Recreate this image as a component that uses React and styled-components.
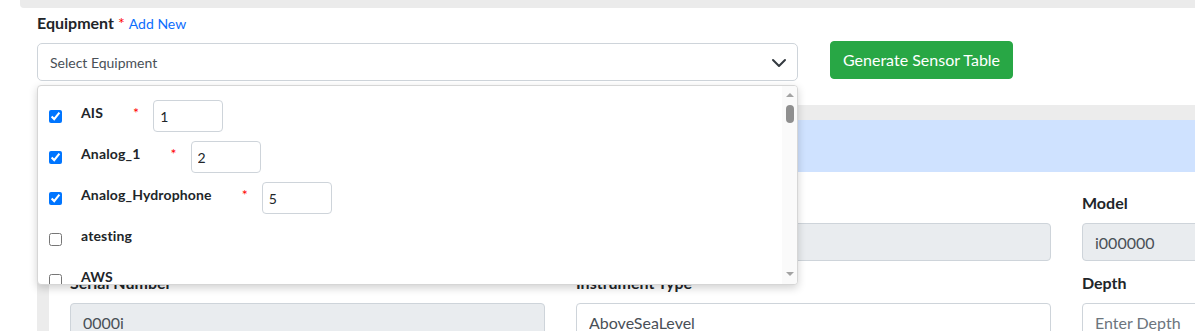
import React from "react";
import styled, { createGlobalStyle } from "styled-components";

const Global = createGlobalStyle`
  html, body { margin: 0; padding: 0; background: #fff; }
  body { font-family: Lato, "Noto Sans", sans-serif; color: #212529; }
  * { box-sizing: border-box; }
`;

const Page = styled.div`
  width: 1195px;
  height: 331px;
  overflow: hidden;
  background: #fff;
`;

const TopStrip = styled.div`
  margin-left: 20px;
  height: 8px;
  background: #ebebeb;
  border-bottom-left-radius: 4px;
`;

const Toolbar = styled.div`
  display: flex;
  align-items: flex-end;
  padding: 3px 0 0 37px;
`;

const FieldColumn = styled.div`
  width: 761px;
  display: flex;
  flex-direction: column;
`;

const TopLabel = styled.div`
  font-size: 16px;
  font-weight: 700;
  line-height: 24px;
  margin-bottom: 7px;
`;

const Required = styled.span`
  color: red;
  margin-left: ${(p) => p.$gap || 4}px;
  font-weight: 400;
`;

const AddLink = styled.a`
  color: #0d6efd;
  font-size: 14px;
  font-weight: 400;
  margin-left: 4px;
  text-decoration: none;
`;

const SelectWrap = styled.div`
  position: relative;
`;

const SelectBox = styled.div`
  height: 38px;
  border: 1px solid #ced4da;
  border-radius: 5px;
  display: flex;
  align-items: center;
  justify-content: space-between;
  padding: 0 10px 0 12px;
  font-size: 14px;
  color: #495057;
  background: #fff;
`;

const GreenButton = styled.button`
  margin: 0 0 2px 32px;
  height: 38px;
  padding: 0 12px;
  border: 1px solid #28a745;
  border-radius: 4px;
  background: #28a745;
  color: #fff;
  font-family: inherit;
  font-size: 16px;
  line-height: 24px;
`;

const Dropdown = styled.div`
  position: absolute;
  top: calc(100% + 4px);
  left: 0;
  width: 100%;
  height: 200px;
  background: #fff;
  border: 1px solid #d6d6d6;
  border-radius: 4px;
  box-shadow: 0 3px 8px rgba(0, 0, 0, 0.18);
  display: flex;
  overflow: hidden;
  z-index: 10;
`;

const OptionList = styled.div`
  flex: 1;
  padding: 14px 0 0 11px;
  display: flex;
  flex-direction: column;
  gap: 9px;
`;

const OptionRow = styled.div`
  display: flex;
  align-items: center;
  min-height: 32px;
  flex-shrink: 0;
`;

const Check = styled.input.attrs({ type: "checkbox" })`
  width: 13px;
  height: 13px;
  margin: 0 19px 0 0;
  flex-shrink: 0;
`;

const OptionLabel = styled.span`
  font-size: 14px;
  font-weight: 700;
  line-height: 20px;
  letter-spacing: 0.15px;
  margin-bottom: 6px;
  white-space: nowrap;
`;

const QtyInput = styled.input`
  width: 70px;
  height: 32px;
  margin-left: 14px;
  border: 1px solid #ced4da;
  border-radius: 4px;
  padding: 0 6px;
  font-family: inherit;
  font-size: 14px;
  color: #212529;
  background: #fff;
`;

const ScrollTrack = styled.div`
  width: 15px;
  background: #fafafa;
  display: flex;
  flex-direction: column;
  align-items: center;
  padding: 7px 0 8px;
`;

const Arrow = styled.div`
  width: 0;
  height: 0;
  border-left: 4px solid transparent;
  border-right: 4px solid transparent;
  ${(p) =>
    p.$down
      ? "border-top: 4px solid #a3a3a3;"
      : "border-bottom: 4px solid #a3a3a3;"}
`;

const Thumb = styled.div`
  margin-top: 8px;
  width: 8px;
  height: 18px;
  border-radius: 4px;
  background: #8f8f8f;
`;

const Spacer = styled.div`
  flex: 1;
`;

const GrayPanel = styled.div`
  margin: 24px 0 0 37px;
  padding: 15px 0 0 12px;
  background: #ececec;
  height: 240px;
`;

const Card = styled.div`
  background: #fff;
  height: 100%;
`;

const CardHeader = styled.div`
  height: 52px;
  background: #cfe2ff;
`;

const CardBody = styled.div`
  padding: 19px 0 0 21px;
  display: grid;
  grid-template-columns: repeat(3, 475px);
  column-gap: 31px;
  row-gap: 10px;
`;

const Field = styled.div`
  display: flex;
  flex-direction: column;
`;

const FieldLabel = styled.label`
  font-size: 16px;
  font-weight: 700;
  line-height: 24px;
  margin-bottom: 8px;
`;

const TextInput = styled.input`
  height: 38px;
  border: 1px solid #ced4da;
  border-radius: 4px;
  padding: 0 12px;
  font-family: inherit;
  font-size: 16px;
  color: #495057;
  background: ${(p) => (p.readOnly ? "#e9ecef" : "#fff")};
  &::placeholder { color: #6c757d; }
`;

const Chevron = () => (
  <svg width="16" height="12" viewBox="0 0 16 12" fill="none">
    <path d="m2 4 6 6 6-6" stroke="#343a40" strokeWidth="2" strokeLinecap="round" strokeLinejoin="round" />
  </svg>
);

const options = [
  { name: "AIS", checked: true, qty: "1" },
  { name: "Analog_1", checked: true, qty: "2" },
  { name: "Analog_Hydrophone", checked: true, qty: "5" },
  { name: "atesting", checked: false },
  { name: "AWS", checked: false },
  { name: "Barometer", checked: false },
];

const fields = [
  { label: "Equipment Name", value: "AIS", readOnly: true },
  { label: "Manufacturer", value: "AIS", readOnly: true },
  { label: "Model", value: "i000000", readOnly: true },
  { label: "Serial Number", value: "0000i", readOnly: true },
  { label: "Instrument Type", value: "AboveSeaLevel", readOnly: false },
  { label: "Depth", placeholder: "Enter Depth", readOnly: false },
];

export default function App() {
  return (
    <Page>
      <Global />
      <TopStrip />
      <Toolbar>
        <FieldColumn>
          <TopLabel>
            Equipment<Required>*</Required>
            <AddLink href="#">Add New</AddLink>
          </TopLabel>
          <SelectWrap>
            <SelectBox>
              <span>Select Equipment</span>
              <Chevron />
            </SelectBox>
            <Dropdown>
              <OptionList>
                {options.map((o) => (
                  <OptionRow key={o.name}>
                    <Check defaultChecked={o.checked} />
                    <OptionLabel>
                      {o.name}
                      {o.checked && <Required $gap={30}>*</Required>}
                    </OptionLabel>
                    {o.checked && <QtyInput defaultValue={o.qty} />}
                  </OptionRow>
                ))}
              </OptionList>
              <ScrollTrack>
                <Arrow />
                <Thumb />
                <Spacer />
                <Arrow $down />
              </ScrollTrack>
            </Dropdown>
          </SelectWrap>
        </FieldColumn>
        <GreenButton>Generate Sensor Table</GreenButton>
      </Toolbar>
      <GrayPanel>
        <Card>
          <CardHeader />
          <CardBody>
            {fields.map((f) => (
              <Field key={f.label}>
                <FieldLabel>{f.label}</FieldLabel>
                <TextInput
                  readOnly={f.readOnly}
                  defaultValue={f.value}
                  placeholder={f.placeholder}
                />
              </Field>
            ))}
          </CardBody>
        </Card>
      </GrayPanel>
    </Page>
  );
}
